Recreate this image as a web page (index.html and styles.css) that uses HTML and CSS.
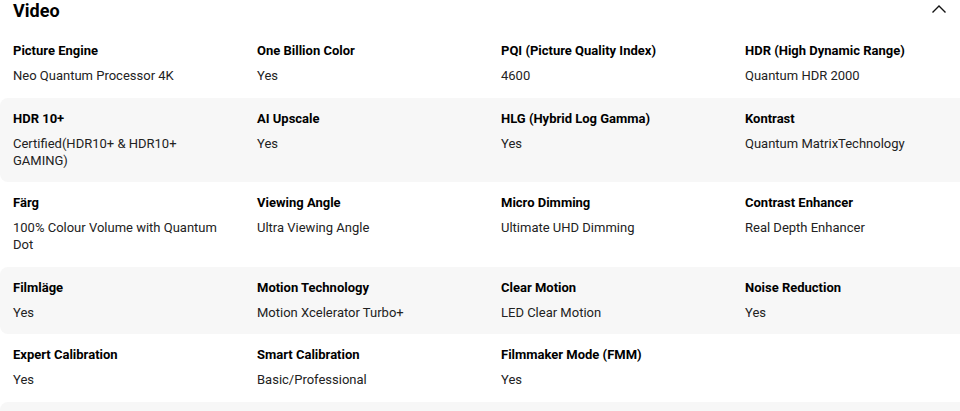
FILE: index.html
```html
<!DOCTYPE html>
<html>
<head>
<meta charset="utf-8">
<link rel="stylesheet" href="styles.css">
</head>
<body>
<section class="spec">
  <header class="spec-head">
    <h2 class="spec-title">Video</h2>
    <svg class="chev" width="16" height="10" viewBox="0 0 16 10"><path d="M1.5 8.5 L8 2 L14.5 8.5" fill="none" stroke="#111" stroke-width="1.4"/></svg>
  </header>
  <div class="row">
    <div class="cell"><div class="lbl">Picture Engine</div><div class="val">Neo Quantum Processor 4K</div></div>
    <div class="cell"><div class="lbl">One Billion Color</div><div class="val">Yes</div></div>
    <div class="cell"><div class="lbl">PQI (Picture Quality Index)</div><div class="val">4600</div></div>
    <div class="cell"><div class="lbl">HDR (High Dynamic Range)</div><div class="val">Quantum HDR 2000</div></div>
  </div>
  <div class="row alt">
    <div class="cell"><div class="lbl">HDR 10+</div><div class="val">Certified(HDR10+ &amp; HDR10+ GAMING)</div></div>
    <div class="cell"><div class="lbl">AI Upscale</div><div class="val">Yes</div></div>
    <div class="cell"><div class="lbl">HLG (Hybrid Log Gamma)</div><div class="val">Yes</div></div>
    <div class="cell"><div class="lbl">Kontrast</div><div class="val">Quantum MatrixTechnology</div></div>
  </div>
  <div class="row">
    <div class="cell"><div class="lbl">Färg</div><div class="val">100% Colour Volume with Quantum Dot</div></div>
    <div class="cell"><div class="lbl">Viewing Angle</div><div class="val">Ultra Viewing Angle</div></div>
    <div class="cell"><div class="lbl">Micro Dimming</div><div class="val">Ultimate UHD Dimming</div></div>
    <div class="cell"><div class="lbl">Contrast Enhancer</div><div class="val">Real Depth Enhancer</div></div>
  </div>
  <div class="row alt">
    <div class="cell"><div class="lbl">Filmläge</div><div class="val">Yes</div></div>
    <div class="cell"><div class="lbl">Motion Technology</div><div class="val">Motion Xcelerator Turbo+</div></div>
    <div class="cell"><div class="lbl">Clear Motion</div><div class="val">LED Clear Motion</div></div>
    <div class="cell"><div class="lbl">Noise Reduction</div><div class="val">Yes</div></div>
  </div>
  <div class="row">
    <div class="cell"><div class="lbl">Expert Calibration</div><div class="val">Yes</div></div>
    <div class="cell"><div class="lbl">Smart Calibration</div><div class="val">Basic/Professional</div></div>
    <div class="cell"><div class="lbl">Filmmaker Mode (FMM)</div><div class="val">Yes</div></div>
    <div class="cell"></div>
  </div>
  <div class="row alt tail"></div>
</section>
</body>
</html>
```

FILE: styles.css
```css
* { box-sizing: border-box; }
html, body { margin: 0; background: #fff; }
body {
  font-family: Roboto, "Noto Sans", sans-serif;
  color: #1a1a1a;
  width: 960px;
  height: 411px;
  overflow: hidden;
}
.spec-head {
  display: flex;
  justify-content: space-between;
  align-items: flex-start;
  height: 30px;
  padding: 0 13px;
}
.spec-title {
  margin: 0;
  font-size: 18px;
  font-weight: 700;
  line-height: 21px;
  color: #000;
}
.chev { margin-top: 4px; }
.row {
  display: grid;
  grid-template-columns: repeat(4, 212px);
  column-gap: 32px;
  padding: 12px 13px 13.5px;
}
.row.alt {
  background: #f7f7f7;
  border-radius: 8px 0 0 8px;
}
.row.tail { height: 20px; padding: 0; }
.lbl {
  font-size: 13px;
  font-weight: 700;
  line-height: 17px;
  color: #000;
}
.val {
  margin-top: 8px;
  font-size: 13px;
  line-height: 17px;
  color: #222;
}
```
